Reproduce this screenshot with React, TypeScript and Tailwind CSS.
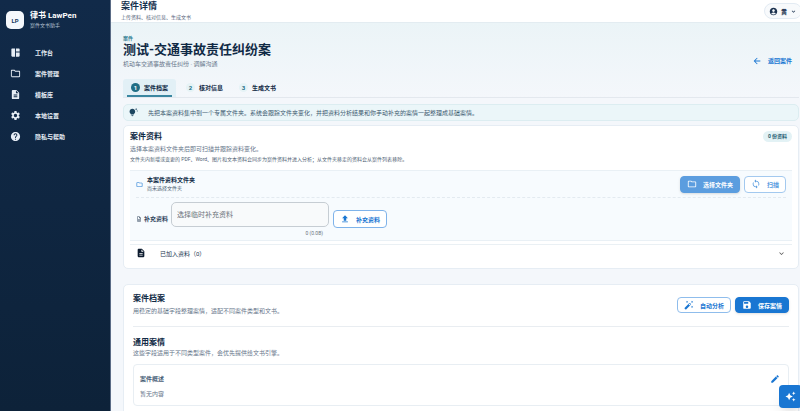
import type { ReactNode } from "react";
import type { IconType } from "react-icons";
import {
  MdAccountCircle,
  MdArrowBack,
  MdAutoAwesome,
  MdAutoFixHigh,
  MdDescription,
  MdEdit,
  MdExpandMore,
  MdHelp,
  MdOutlineDescription,
  MdOutlineFolder,
  MdSave,
  MdSettings,
  MdSpaceDashboard,
  MdSync,
  MdTipsAndUpdates,
  MdUpload,
} from "react-icons/md";

const navItems: { label: string; icon: IconType }[] = [
  { label: "工作台", icon: MdSpaceDashboard },
  { label: "案件管理", icon: MdOutlineFolder },
  { label: "模板库", icon: MdDescription },
  { label: "本地设置", icon: MdSettings },
  { label: "隐私与帮助", icon: MdHelp },
];

const steps = ["案件档案", "核对信息", "生成文书"];

function Sidebar() {
  return (
    <aside className="w-[111px] shrink-0 border-r border-[#5a6b85] bg-gradient-to-b from-[#112a49] to-[#0d2239] text-white">
      <div className="flex items-center gap-1.5 px-1.5 pt-[10px]">
        <div className="flex h-[18px] w-[18px] items-center justify-center rounded-[5px] bg-[#f5f8fc] text-[6px] font-bold text-[#17395c]">
          LP
        </div>
        <div>
          <p className="text-[8px] leading-[11px] font-bold">律书 LawPen</p>
          <p className="text-[5px] leading-[9px] text-[#b5c2d2]">案件文书助手</p>
        </div>
      </div>
      <nav className="mt-3 flex flex-col">
        {navItems.map(({ label, icon: Icon }) => (
          <a
            key={label}
            href="#"
            className="flex h-[21px] items-center gap-[14px] pl-2.5 text-[6px] font-bold text-[#e6edf5]"
          >
            <Icon className="h-[11px] w-[11px]" />
            {label}
          </a>
        ))}
      </nav>
    </aside>
  );
}

function TopBar() {
  return (
    <header className="flex h-[22px] shrink-0 items-start justify-between bg-white pl-[10px]">
      <div>
        <h2 className="text-[9px] leading-[12px] font-bold text-[#14304d]">案件详情</h2>
        <p className="text-[5px] leading-[10px] text-[#56657a]">
          上传资料、核对信息、生成文书
        </p>
      </div>
      <button className="mt-[3px] -mr-0.5 flex h-4 items-center gap-[3px] rounded-full border border-[#e3ebf3] bg-[#f8fafc] px-1 text-[6px] font-bold text-[#1d3350]">
        <MdAccountCircle className="h-[9px] w-[9px]" />
        黄
        <MdExpandMore className="h-[7px] w-[7px]" />
      </button>
    </header>
  );
}

function Button({
  icon: Icon,
  className,
  children,
}: {
  icon: IconType;
  className: string;
  children: ReactNode;
}) {
  return (
    <button
      className={`flex shrink-0 items-center gap-1.5 rounded-[4px] border px-1.5 text-[6px] font-bold ${className}`}
    >
      <Icon className="h-[10px] w-[10px]" />
      {children}
    </button>
  );
}

function Materials() {
  return (
    <section className="mt-1 rounded-[5px] border border-[#e6edf4] bg-white px-1.5 pt-[5px] pb-[7px]">
      <div className="flex items-start justify-between">
        <div>
          <h3 className="text-[8px] leading-[12px] font-bold text-[#102a45]">案件资料</h3>
          <p className="text-[6px] leading-[11px] text-[#66758a]">
            选择本案资料文件夹后即可扫描并跟踪资料变化。
          </p>
          <p className="text-[5px] leading-[10px] text-[#4f5f74]">
            文件夹内新增或变更的 PDF、Word、图片和文本资料会同步为案件资料并进入分析；从文件夹移走的资料会从案件列表移除。
          </p>
        </div>
        <span className="rounded-full bg-[#e3f2f5] px-[5px] text-[5px] leading-[11px] font-bold text-[#1d5a70]">
          0 份资料
        </span>
      </div>

      <div className="mt-1.5 border-y border-[#e9f0f5] bg-[#f7fbfe] px-1.5">
        <div className="flex h-[27px] items-center border-b border-dashed border-[#e3eaf0]">
          <MdOutlineFolder className="h-[7px] w-[7px] text-[#1976d2]" />
          <div className="ml-1 flex-1 pb-px">
            <p className="text-[6px] leading-[9px] font-bold text-[#102a45]">本案件资料文件夹</p>
            <p className="text-[5px] leading-[9px] text-[#4a5b70]">尚未选择文件夹</p>
          </div>
          <Button
            icon={MdOutlineFolder}
            className="mr-1 h-[17px] border-[#5b9ddf] bg-[#5b9ddf] text-white shadow-sm"
          >
            选择文件夹
          </Button>
          <Button icon={MdSync} className="h-[17px] border-[#a3c9ef] bg-white text-[#5b9ddf]">
            扫描
          </Button>
        </div>
        <div className="flex h-[42px] items-start pt-1">
          <label
            htmlFor="extra-files"
            className="mt-3 flex items-center gap-0.5 text-[6px] leading-[9px] font-bold text-[#33475e]"
          >
            <MdOutlineDescription className="h-[6px] w-[6px]" />
            补充资料
          </label>
          <div className="ml-[3px] w-[158px]">
            <input
              id="extra-files"
              placeholder="选择临时补充资料"
              className="block h-[25px] w-full rounded-[5px] border border-[#c6cdd3] bg-[#f8fafb] px-[5px] text-[7px] placeholder:text-[#6b727a]"
            />
            <p className="pr-1.5 text-right text-[5px] leading-[12px] text-[#6c757f]">0 (0.0B)</p>
          </div>
          <Button
            icon={MdUpload}
            className="mt-2 ml-1 h-[18px] border-[#7fb3ea] bg-white text-[#1976d2]"
          >
            补充资料
          </Button>
        </div>
      </div>

      <button className="mt-[3px] flex h-[17px] w-full items-center border-t border-[#eaf0f4] px-1.5 text-[6px] text-[#20364f]">
        <MdDescription className="h-[10px] w-[10px] text-[#0c1b2e]" />
        <span className="ml-[14px]">已加入资料（0）</span>
        <MdExpandMore className="ml-auto h-[9px] w-[9px] text-[#555]" />
      </button>
    </section>
  );
}

function Profile() {
  return (
    <section className="mt-[15px] rounded-[5px] border border-[#e6edf4] bg-white px-[9px] pt-2 pb-6">
      <div className="flex items-center justify-between border-b border-[#e9edf1] pb-[9px]">
        <div>
          <h3 className="text-[8px] leading-[12px] font-bold text-[#102a45]">案件档案</h3>
          <p className="text-[6px] leading-[12px] text-[#66758a]">
            用稳定的基础字段整理案情，适配不同案件类型和文书。
          </p>
        </div>
        <div className="flex gap-1">
          <Button icon={MdAutoFixHigh} className="h-4 border-[#8fbdec] bg-white text-[#1976d2]">
            自动分析
          </Button>
          <Button icon={MdSave} className="h-4 border-[#1976d2] bg-[#1976d2] text-white shadow-sm">
            保存案情
          </Button>
        </div>
      </div>
      <h3 className="mt-[10px] text-[8px] leading-[11px] font-bold text-[#102a45]">通用案情</h3>
      <p className="text-[6px] leading-[9px] text-[#66758a]">
        这些字段适用于不同类型案件，会优先提供给文书引擎。
      </p>
      <div className="mt-[7px] rounded-[4px] border border-[#e8eef3] px-1.5 pt-2 pb-[5px]">
        <div className="flex items-center justify-between text-[6px] leading-[12px] font-bold text-[#4a5f78]">
          案件概述
          <button aria-label="编辑案件概述" className="mr-0.5 text-[#1976d2]">
            <MdEdit className="h-[10px] w-[10px]" />
          </button>
        </div>
        <p className="mt-[3px] text-[6px] leading-[12px] text-[#66758a]">暂无内容</p>
      </div>
    </section>
  );
}

export default function App() {
  return (
    <div
      lang="zh-CN"
      className="flex h-screen overflow-hidden font-[Roboto,'Noto_Sans_CJK_SC',sans-serif]"
    >
      <Sidebar />
      <div className="flex min-w-0 flex-1 flex-col">
        <TopBar />
        <main className="min-h-0 flex-1 overflow-y-auto border-t border-[#e3ecf1] bg-[linear-gradient(180deg,#ebf4f7_0px,#f4f7fb_75px)] pr-px pl-3 [scrollbar-width:none]">
          <div className="flex items-end justify-between pt-[11px]">
            <div>
              <p className="text-[5px] leading-[8px] font-bold text-[#2b7a8f]">案件</p>
              <h1 className="text-[13px] leading-[16px] font-bold text-[#102a45]">
                测试-交通事故责任纠纷案
              </h1>
              <p className="text-[6px] leading-[12px] text-[#66758a]">
                机动车交通事故责任纠纷 · 调解沟通
              </p>
            </div>
            <a
              href="#"
              className="mr-[7px] mb-1 flex items-center gap-1.5 text-[6px] leading-[10px] font-bold text-[#1976d2]"
            >
              <MdArrowBack className="h-[10px] w-[10px]" />
              返回案件
            </a>
          </div>

          <div role="tablist" className="mt-[9px] flex border-b border-[#e3e8ee]">
            {steps.map((step, i) => (
              <button
                key={step}
                role="tab"
                aria-selected={i === 0}
                className={`flex flex-col px-1 text-[6px] font-bold text-[#102a45] ${
                  i === 0 ? "mr-0.5 rounded-t-[3px] bg-[#e2f0f6]" : ""
                }`}
              >
                <span className="flex h-4 items-center gap-1 px-1">
                  <span
                    className={`flex h-[9px] w-[9px] items-center justify-center rounded-full ${
                      i === 0 ? "bg-[#216e85] text-white" : "bg-[#e6f3f6] text-[#216e85]"
                    }`}
                  >
                    {i + 1}
                  </span>
                  {step}
                </span>
                <span className={`h-0.5 w-full ${i === 0 ? "bg-[#3a86a0]" : ""}`} />
              </button>
            ))}
          </div>

          <div className="mt-1.5 flex h-[17px] items-center gap-[10px] rounded-[5px] border border-[#dcedf1] bg-[#ebf6f9] px-[5px] text-[6px] text-[#3d5a70]">
            <MdTipsAndUpdates className="h-[9px] w-[9px] text-[#1c4560]" />
            先把本案资料集中到一个专属文件夹。系统会跟踪文件夹变化，并把资料分析结果和你手动补充的案情一起整理成基础案情。
          </div>

          <Materials />
          <Profile />
        </main>
      </div>
      <button
        aria-label="智能助手"
        className="fixed -right-0.5 bottom-[3px] flex h-[23px] w-[23px] items-center justify-center rounded-[4px] bg-[#1976d2] text-white shadow-lg"
      >
        <MdAutoAwesome className="h-[11px] w-[11px]" />
      </button>
    </div>
  );
}
